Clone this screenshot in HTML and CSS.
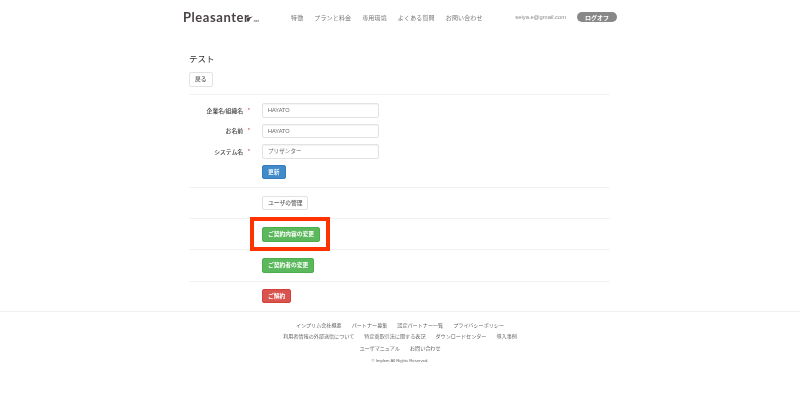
FILE: index.html
```html
<!DOCTYPE html>
<html lang="ja">
<head>
<meta charset="utf-8">
<title>Pleasanter</title>
<link rel="stylesheet" href="styles.css">
</head>
<body>
<header class="header">
  <div class="logo"><span class="logo-name">Pleasanter</span><svg class="logo-mark" width="6" height="6" viewBox="0 0 6 6"><path d="M0 5.5V1.8L6 0.6 3.2 2.4 2 5.5z" fill="#4a4245"/></svg><span class="logo-net">.net</span></div>
  <nav class="nav">
    <a>特徴</a><a>プランと料金</a><a>専用環境</a><a>よくある質問</a><a>お問い合わせ</a>
  </nav>
  <div class="account">
    <span class="email">seiya.e@gmail.com</span>
    <span class="logoff">ログオフ</span>
  </div>
</header>
<main class="main">
  <h1 class="title">テスト</h1>
  <div class="back-row"><button class="btn btn-default">戻る</button></div>
  <section class="section section-form">
    <div class="form-row"><label class="form-label">企業名/組織名<span class="req">*</span></label><span class="input">HAYATO</span></div>
    <div class="form-row"><label class="form-label">お名前<span class="req">*</span></label><span class="input">HAYATO</span></div>
    <div class="form-row"><label class="form-label">システム名<span class="req">*</span></label><span class="input">プリザンター</span></div>
    <div class="form-actions"><button class="btn btn-blue">更新</button></div>
  </section>
  <section class="section"><button class="btn btn-default">ユーザの管理</button></section>
  <section class="section">
    <span class="highlight"><button class="btn btn-green">ご契約内容の変更</button></span>
  </section>
  <section class="section"><button class="btn btn-green">ご契約者の変更</button></section>
  <section class="section"><button class="btn btn-red">ご解約</button></section>
</main>
<footer class="footer">
  <div class="footer-links"><a>インプリム会社概要</a><a>パートナー募集</a><a>認定パートナー一覧</a><a>プライバシーポリシー</a></div>
  <div class="footer-links"><a>利用者情報の外部送信について</a><a>特定商取引法に関する表記</a><a>ダウンロードセンター</a><a>導入事例</a></div>
  <div class="footer-links"><a>ユーザマニュアル</a><a>お問い合わせ</a></div>
  <div class="copyright">© Implem All Rights Reserved.</div>
</footer>
</body>
</html>
```
FILE: styles.css
```css
* { box-sizing: border-box; }
html, body { margin: 0; padding: 0; background: #fff; }
body {
  font-family: "Liberation Sans", "Noto Sans CJK JP", sans-serif;
  color: #333;
  font-size: 6px;
  width: 800px;
  height: 400px;
  overflow: hidden;
}
.header {
  width: 434px;
  height: 33px;
  margin: 0 auto;
  display: flex;
  align-items: center;
  padding-top: 1px;
  filter: blur(.3px);
}
.logo { display: flex; align-items: baseline; width: 108px; color: #4a4245; }
.logo-name { font-family: "Lato", "Liberation Sans", sans-serif; font-size: 13px; font-weight: 700; letter-spacing: 0.55px; }
.logo-mark { margin-left: -2.5px; }
.logo-net { font-size: 3.5px; }
.nav { display: flex; gap: 11px; color: #777; font-size: 6px; letter-spacing: 0.15px; }
.account { margin-left: auto; display: flex; align-items: center; gap: 11px; }
.email { color: #888; font-size: 5.8px; }
.logoff {
  width: 40px; height: 10px; border-radius: 5px;
  background: #888; color: #fff;
  font-size: 6px; font-weight: bold;
  display: flex; align-items: center; justify-content: center;
}
.main { width: 421px; margin: 0 0 0 189px; }
.title { margin: 20px 0 0; font-size: 8.5px; font-weight: 400; line-height: 13px; color: #333; filter: blur(.2px); }
.back-row { margin-top: 6px; height: 18px; }
.section { border-top: 1px solid #f2f2f2; padding-left: 73px; height: 31.2px; display: flex; align-items: center; }
.section:last-child { height: 30px; }
.section-form { display: block; height: 93px; padding: 8px 0 0 0; margin-top: 4px; }
.form-row { display: flex; align-items: center; height: 14.5px; margin-bottom: 6px; }
.form-label { width: 73px; padding-right: 19px; text-align: right; font-weight: 500; font-size: 5.8px; position: relative; color: #444; filter: blur(.3px); }
.req { position: absolute; right: 12px; top: 1px; color: #c33; }
.input {
  width: 117px; height: 14.5px;
  border: 1px solid #e2e2e2; border-radius: 2px;
  padding: 0 5px; line-height: 12.5px;
  font-size: 5.6px; color: #666;
  box-shadow: inset 0 1px 1px rgba(0,0,0,.05);
  filter: blur(.2px);
}
.form-actions { padding-left: 73px; }
.btn {
  display: inline-block;
  height: 14.5px; padding: 0 5px;
  border: 1px solid #ccc; border-radius: 2px;
  font: 500 5.75px/12.5px "Liberation Sans", "Noto Sans CJK JP", sans-serif;
  background: #fff; color: #555; margin: 0;
  filter: blur(.25px);
}
.btn-default { border-color: #e2e2e2; color: #666; }
.btn-blue { background: #428bca; border-color: #357ebd; color: #fff; }
.btn-green { background: #5cb85c; border-color: #4cae4c; color: #fff; font-weight: 700; }
.btn-red { background: #d9534f; border-color: #d43f3a; color: #fff; font-weight: 700; }
.highlight { position: relative; display: inline-block; line-height: 0; }
.highlight::after {
  content: "";
  position: absolute;
  left: -12px; right: -10px; top: -10px; bottom: -9px;
  border: 4px solid #ff3300;
  pointer-events: none;
}
.footer { border-top: 1px solid #f2f2f2; padding-top: 8px; text-align: center; color: #666; filter: blur(.3px); }
.footer-links { display: flex; justify-content: center; gap: 10px; font-size: 5.1px; line-height: 11.7px; }
.copyright { font-size: 4.2px; line-height: 11px; color: #666; }
```
